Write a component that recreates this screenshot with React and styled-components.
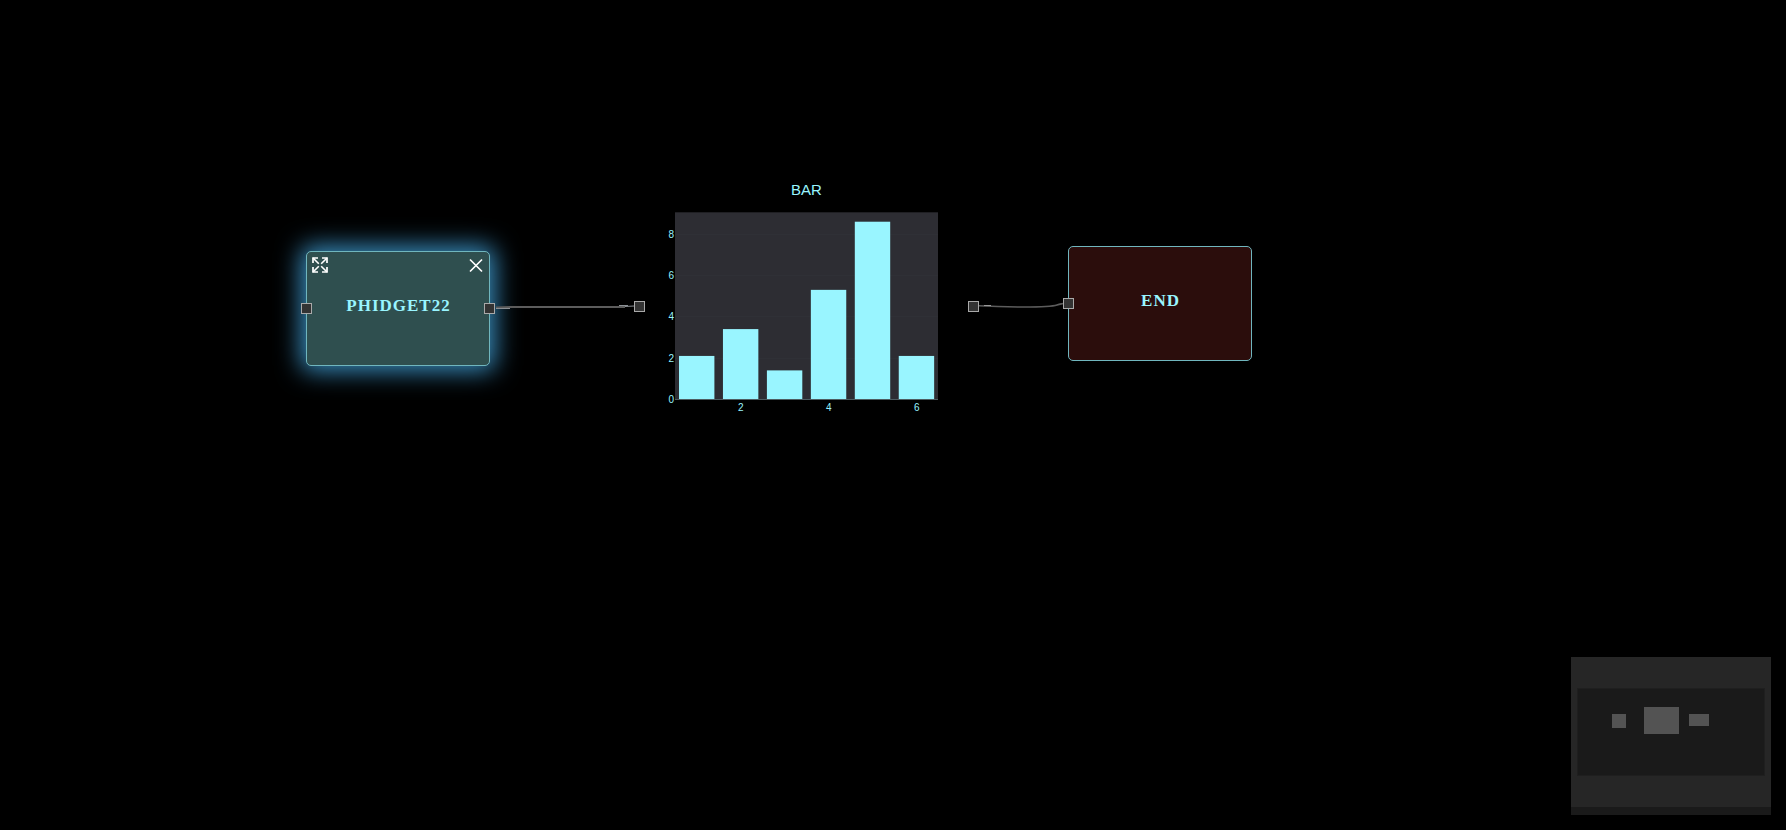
import React from "react";
import styled, { createGlobalStyle } from "styled-components";

const GlobalStyle = createGlobalStyle`
  body {
    margin: 0;
    background: #000;
  }
  *, *::before, *::after {
    box-sizing: border-box;
  }
`;

const ACCENT = "#99f5ff";

const Canvas = styled.main`
  position: relative;
  min-height: 100vh;
  overflow: hidden;
  background: #000;
`;

const Wires = styled.svg`
  position: absolute;
  inset: 0;
  width: 100%;
  height: 100%;
  fill: none;
  stroke: #5c5c5c;
  stroke-width: 2;
  pointer-events: none;
`;

/* A node's place on the canvas; its input and output sit in the outer columns. */
const CanvasItem = styled.section`
  position: absolute;
  left: ${(p) => p.$x}px;
  top: ${(p) => p.$y}px;
  display: grid;
  grid-template-columns: 11px 1fr 11px;
  align-items: center;
`;

const Node = styled(CanvasItem)`
  width: 184px;
  height: 115px;
  grid-template-columns: 5px 1fr 5px;
  border: 1px solid #70b6be;
  border-radius: 5px;
  background: ${(p) => (p.$tone === "end" ? "#2b0d0c" : "#2f4f4f")};
  box-shadow: ${(p) => (p.$selected ? "0 0 24px 5px #3a8fc0" : "none")};
`;

const NodeTitle = styled.h2`
  grid-column: 2;
  margin: 0;
  padding-bottom: 6px;
  color: ${ACCENT};
  font: bold 17px/20px "Liberation Serif", "Times New Roman", serif;
  letter-spacing: 1px;
  text-align: center;
  text-indent: 1px;
`;

const NodeTools = styled.div`
  position: absolute;
  inset: 5px 5px auto;
  display: flex;
  justify-content: space-between;
`;

const ToolButton = styled.button`
  display: block;
  width: 16px;
  height: 16px;
  padding: 0;
  border: 0;
  background: none;
  color: #fff;
  cursor: pointer;

  svg {
    display: block;
  }
`;

const Socket = styled.button`
  justify-self: ${(p) => (p.$side === "out" ? "start" : "end")};
  width: 11px;
  height: 11px;
  padding: 0;
  border: 1px solid #a9a9a9;
  background: #333;
  cursor: crosshair;
`;

const Chart = styled.figure`
  width: 323px;
  margin: 0;
`;

const ChartTitle = styled.figcaption`
  color: ${ACCENT};
  font: 15px/20px "Liberation Sans", Arial, sans-serif;
  text-align: center;
`;

const Plot = styled.svg`
  display: block;
  width: 100%;
  height: 233px;
  fill: ${ACCENT};
  font: 10px "Liberation Sans", Arial, sans-serif;
`;

const MiniMap = styled.aside`
  position: absolute;
  right: 15px;
  bottom: 15px;
  width: 200px;
  padding-bottom: 8px;
  background: #1a1a1a;
`;

const MapArea = styled.div`
  height: 150px;
  padding: 31px 6px;
  background: #262626;
`;

const MapView = styled.div`
  display: flex;
  align-items: flex-start;
  height: 88px;
  padding: 18px 34px;
  border: 1px solid #1f1f1f;
  background: #1a1a1a;
`;

const MapNode = styled.div`
  width: ${(p) => p.$w}px;
  height: ${(p) => p.$h}px;
  margin-top: ${(p) => (p.$large ? 0 : 7)}px;
  background: #535353;

  &:nth-child(2) {
    margin-left: 18px;
    margin-right: 10px;
  }
`;

const values = [2.1, 3.4, 1.4, 5.3, 8.6, 2.1];
const UNIT = 20.65;
const BASE = 199;

function ExpandIcon() {
  return (
    <svg width="16" height="16" viewBox="0 0 16 16" fill="none" stroke="currentColor">
      <path d="M1 6V1h5M10 1h5v5M15 10v5h-5M6 15H1v-5" strokeWidth="1.7" />
      <path d="M1 1l5.8 5.8M15 1L9.2 6.8M15 15L9.2 9.2M1 15l5.8-5.8" strokeWidth="1.6" />
    </svg>
  );
}

function CloseIcon() {
  return (
    <svg width="16" height="16" viewBox="0 0 16 16" fill="none" stroke="currentColor" strokeWidth="1.7">
      <path d="M2 2.5l12 12M14 2.5l-12 12" />
    </svg>
  );
}

function BarChart() {
  return (
    <Chart>
      <ChartTitle>BAR</ChartTitle>
      <Plot viewBox="0 0 323 233" role="img" aria-label="Bar chart">
        <rect x="30" y="12.3" width="263" height="187.5" fill="#2d2d33" />
        <path d="M30 34.5h263M30 75.5h263M30 116.5h263M30 158.5h263" stroke="#2f3036" />
        {values.map((v, i) => (
          <rect
            key={i}
            x={34 + i * 43.95}
            y={BASE + 0.3 - v * UNIT}
            width="35.4"
            height={v * UNIT}
          />
        ))}
        <path d="M30 199.5h263" stroke="#4d5c61" />
        {[0, 2, 4, 6, 8].map((t) => (
          <text key={t} x="29" y={203 - t * UNIT} textAnchor="end">{t}</text>
        ))}
        {[2, 4, 6].map((t) => (
          <text key={t} x={8 + t * 43.95} y="211" textAnchor="middle">{t}</text>
        ))}
      </Plot>
    </Chart>
  );
}

export default function App() {
  return (
    <>
      <GlobalStyle />
      <Canvas>
        <Node $x={306} $y={251} $selected>
          <Socket aria-label="Phidget22 input" />
          <NodeTitle>PHIDGET22</NodeTitle>
          <Socket $side="out" aria-label="Phidget22 output" />
          <NodeTools>
            <ToolButton aria-label="Expand"><ExpandIcon /></ToolButton>
            <ToolButton aria-label="Remove"><CloseIcon /></ToolButton>
          </NodeTools>
        </Node>
        <CanvasItem $x={634} $y={180}>
          <Socket aria-label="Bar input" />
          <BarChart />
          <Socket $side="out" aria-label="Bar output" />
        </CanvasItem>
        <Node $x={1068} $y={246} $tone="end">
          <Socket aria-label="End input" />
          <NodeTitle>END</NodeTitle>
        </Node>
        <Wires aria-hidden="true">
          <path d="M496 307.5L510 307H560L625 307" />
          <path d="M496 308.5h14M619 305.5h9M625 306.5l9-.5" stroke="#8a8f94" strokeWidth="1" />
          <path d="M979 305.8C1000 307 1048 308 1057 305C1060 304 1061 304 1063 303.5" strokeWidth="1.6" />
          <path d="M984 305.5h7" stroke="#999" strokeWidth="1" />
        </Wires>
        <MiniMap aria-label="Overview">
          <MapArea>
            <MapView>
              <MapNode $w={14} $h={14} />
              <MapNode $w={35} $h={27} $large />
              <MapNode $w={20} $h={12} />
            </MapView>
          </MapArea>
        </MiniMap>
      </Canvas>
    </>
  );
}
